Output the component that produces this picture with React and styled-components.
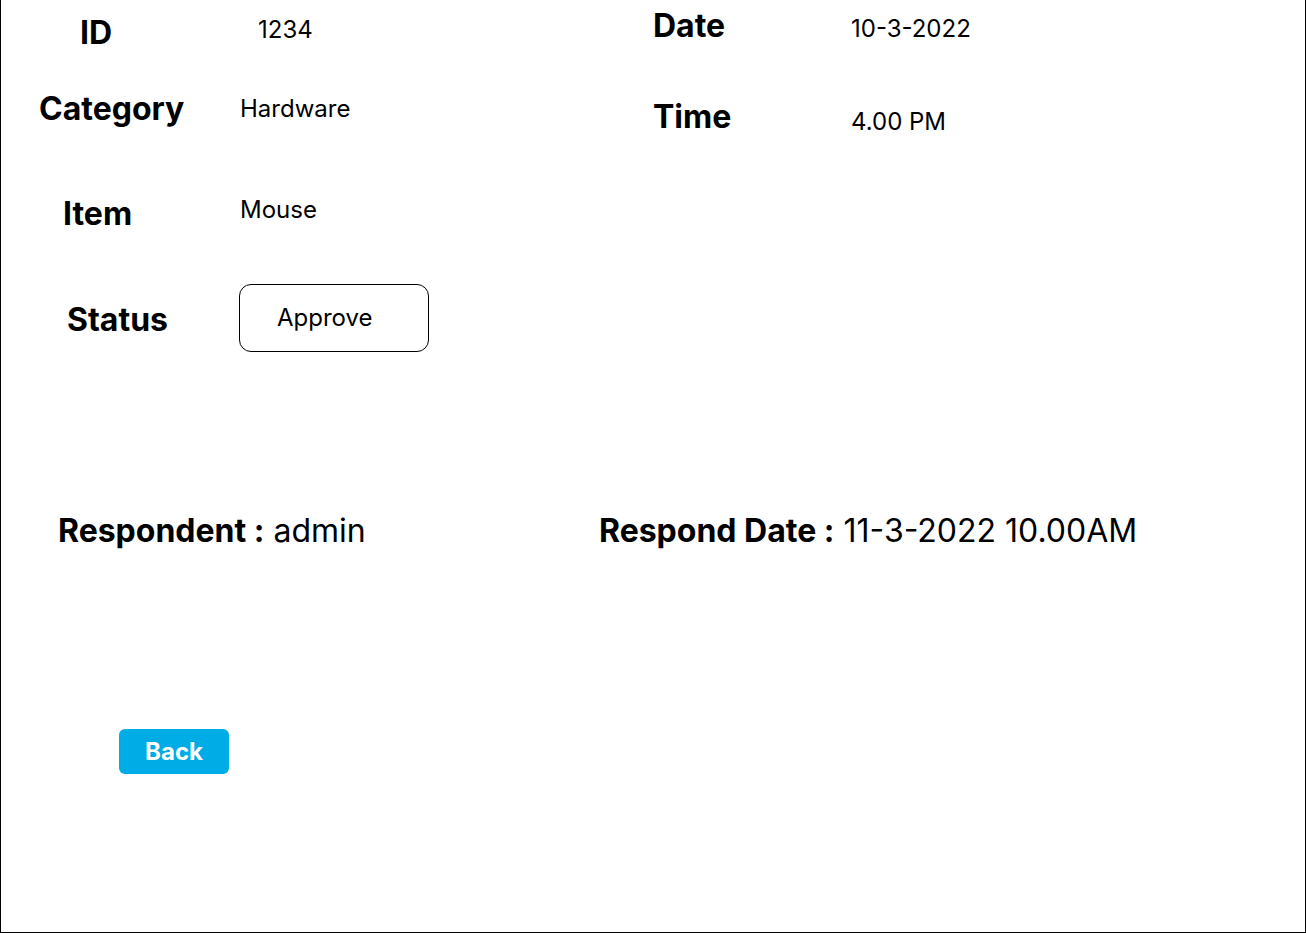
import React from "react";
import styled, { createGlobalStyle } from "styled-components";

const GlobalStyle = createGlobalStyle`
  * {
    box-sizing: border-box;
  }
  body {
    margin: 0;
    background: #ffffff;
    font-family: Inter, "Noto Sans", sans-serif;
    color: #000000;
  }
`;

//the detail fields, left and right columns
const leftFields = [
  { label: "ID", value: "1234", indent: 79, valueIndent: 19, height: 64, gap: 0, drop: 2, lift: 8 },
  { label: "Category", value: "Hardware", indent: 38, valueIndent: 1, height: 56, gap: 16 },
  { label: "Item", value: "Mouse", indent: 62, valueIndent: 1, height: 56, gap: 49, lift: 8 },
];

const rightFields = [
  { label: "Date", value: "10-3-2022", height: 50, gap: 0, drop: 6 },
  { label: "Time", value: "4.00 PM", height: 52, gap: 40, drop: 10 },
];

const App = () => {
  return (
    <>
      <GlobalStyle />
      <Page>
        <Details>
          <LeftCol>
            {leftFields.map((field) => (
              <Row key={field.label} h={field.height} gap={field.gap}>
                <Label indent={field.indent}>{field.label}</Label>
                <Value indent={field.valueIndent} drop={field.drop} lift={field.lift}>
                  {field.value}
                </Value>
              </Row>
            ))}
            <Row h={68} gap={43}>
              <Label indent={66} drop={3}>
                Status
              </Label>
              <StatusBox>Approve</StatusBox>
            </Row>
          </LeftCol>
          <RightCol>
            {rightFields.map((field) => (
              <Row key={field.label} h={field.height} gap={field.gap}>
                <RightLabel>{field.label}</RightLabel>
                <Value drop={field.drop}>{field.value}</Value>
              </Row>
            ))}
          </RightCol>
        </Details>
        <ResponseRow>
          <ResponseItem>
            <strong>Respondent :</strong> admin
          </ResponseItem>
          <ResponseItem>
            <strong>Respond Date :</strong> 11-3-2022 10.00AM
          </ResponseItem>
        </ResponseRow>
        <Footer>
          <BackButton>Back</BackButton>
        </Footer>
      </Page>
    </>
  );
};

const Page = styled.div`
  width: 1306px;
  height: 933px;
  border: 1px solid #000000;
  border-top: none;
  display: flex;
  flex-direction: column;
`;

const Details = styled.div`
  display: flex;
`;

const LeftCol = styled.div`
  width: 598px;
  display: flex;
  flex-direction: column;
`;

const RightCol = styled.div`
  flex: 1;
  display: flex;
  flex-direction: column;
  padding-left: 54px;
`;

const Row = styled.div`
  display: flex;
  align-items: center;
  height: ${(p) => p.h}px;
  margin-top: ${(p) => p.gap || 0}px;
`;

const Label = styled.div`
  width: 238px;
  padding-left: ${(p) => p.indent}px;
  margin-top: ${(p) => p.drop || 0}px;
  font-size: 32px;
  font-weight: 700;
`;

const RightLabel = styled.div`
  width: 198px;
  font-size: 32px;
  font-weight: 700;
`;

const Value = styled.div`
  padding-left: ${(p) => p.indent || 0}px;
  margin-top: ${(p) => (p.drop || 0) - (p.lift || 0)}px;
  font-size: 24px;
  font-weight: 400;
`;

const StatusBox = styled.div`
  width: 190px;
  height: 68px;
  border: 1px solid #000000;
  border-radius: 12px;
  padding: 0 0 2px 37px;
  display: flex;
  align-items: center;
  font-size: 24px;
`;

const ResponseRow = styled.div`
  display: flex;
  align-items: center;
  height: 40px;
  margin-top: 158px;
  padding-left: 57px;
`;

const ResponseItem = styled.div`
  width: 541px;
  font-size: 32px;
  white-space: nowrap;

  strong {
    font-weight: 700;
  }
`;

const Footer = styled.div`
  margin-top: 179px;
  padding-left: 118px;
`;

const BackButton = styled.button`
  width: 110px;
  height: 45px;
  border: none;
  border-radius: 6px;
  background: #00ace6;
  color: #ffffff;
  font-family: Inter, "Noto Sans", sans-serif;
  font-size: 24px;
  font-weight: 700;
  cursor: pointer;
`;

export default App;
